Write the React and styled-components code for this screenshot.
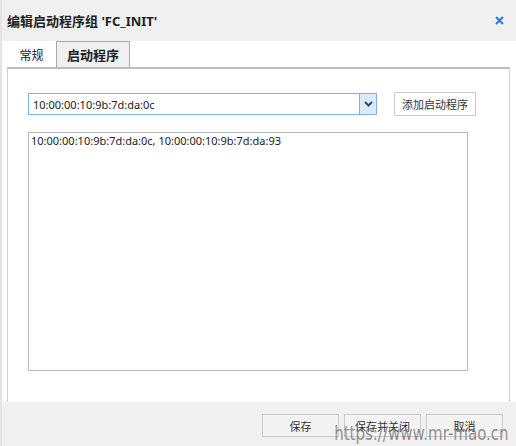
import React from "react";
import styled, { createGlobalStyle } from "styled-components";

const GlobalStyle = createGlobalStyle`
  html, body {
    margin: 0;
    padding: 0;
    background: #fff;
  }
  body {
    font-family: "Noto Sans", "Noto Sans CJK SC", sans-serif;
    font-size: 11px;
    color: #222;
  }
  * {
    box-sizing: border-box;
  }
`;

const Dialog = styled.div`
  position: relative;
  width: 516px;
  height: 446px;
  display: flex;
  flex-direction: column;
  background: #fff;
  border-left: 2px solid #e4e4e4;
  overflow: hidden;
`;

const Header = styled.header`
  height: 41px;
  flex: none;
  display: flex;
  align-items: center;
  justify-content: space-between;
  padding: 0 11px 0 5px;
  background: #f0f0f0;
`;

const Title = styled.h1`
  margin: 0;
  font-size: 13px;
  font-weight: 700;
  color: #222;
  font-family: "Noto Sans", "Noto Sans CJK SC", sans-serif;
`;

const CloseButton = styled.button`
  width: 12px;
  height: 12px;
  padding: 0;
  border: none;
  background: transparent;
  display: flex;
  align-items: center;
  justify-content: center;
  cursor: pointer;
`;

const Body = styled.div`
  flex: 1;
  display: flex;
  flex-direction: column;
  padding: 0 6px 0 5px;
`;

const TabBar = styled.div`
  height: 26px;
  flex: none;
  display: flex;
  align-items: stretch;
`;

const Tab = styled.div`
  width: ${(p) => p.$width}px;
  display: flex;
  align-items: center;
  justify-content: center;
  font-size: ${(p) => (p.$active ? 13 : 12)}px;
  font-weight: ${(p) => (p.$active ? 700 : 400)};
  color: #222;
  background: ${(p) => (p.$active ? "#f0f0f0" : "#fff")};
  border: 1px solid ${(p) => (p.$active ? "#a8a8a8" : "transparent")};
  border-bottom: none;
`;

const Panel = styled.section`
  flex: 1;
  border-top: 2px solid #bcbcbc;
  border-left: 1px solid #cfcfcf;
  border-right: 1px solid #cfcfcf;
  padding: 23px 0 0 20px;
  display: flex;
  flex-direction: column;
  gap: 16px;
`;

const Row = styled.div`
  display: flex;
  align-items: center;
  gap: 17px;
`;

const Select = styled.div`
  width: 349px;
  height: 22px;
  display: flex;
  border: 1px solid #7eb4ea;
  background: #fff;
`;

const SelectValue = styled.div`
  flex: 1;
  display: flex;
  align-items: center;
  padding-left: 4px;
  font-size: 11px;
  color: #222;
`;

const SelectArrow = styled.div`
  width: 17px;
  display: flex;
  align-items: center;
  justify-content: center;
  background: #dcebfc;
  border-left: 1px solid #7eb4ea;
`;

const Button = styled.button`
  width: ${(p) => p.$width}px;
  height: ${(p) => p.$height}px;
  padding: 0;
  font-family: "Noto Sans", "Noto Sans CJK SC", sans-serif;
  font-size: 11px;
  color: #333;
  background: ${(p) => p.$bg || "#fff"};
  border: 1px solid #cccccc;
  cursor: pointer;
`;

const TextArea = styled.div`
  width: 440px;
  height: 239px;
  border: 1px solid #b4b6cc;
  padding: 0 2px;
  font-size: 11px;
  line-height: 16px;
  color: #222;
`;

const Footer = styled.footer`
  height: 44px;
  flex: none;
  display: flex;
  justify-content: flex-end;
  align-items: flex-start;
  gap: 5px;
  padding: 12px 13px 0 0;
  background: #f0f0f0;
`;

const Watermark = styled.div`
  position: absolute;
  right: 7px;
  bottom: 1px;
  font-family: "DejaVu Sans", sans-serif;
  font-size: 20px;
  color: rgba(110, 110, 110, 0.75);
  transform: scaleX(0.75);
  transform-origin: right center;
  white-space: nowrap;
  pointer-events: none;
`;

const App = () => {
  return (
    <>
      <GlobalStyle />
      <Dialog>
        <Header>
          <Title>编辑启动程序组 'FC_INIT'</Title>
          <CloseButton aria-label="close">
            <svg width="9" height="9" viewBox="0 0 9 9">
              <path d="M1 1 L8 8 M8 1 L1 8" stroke="#2f7bd6" strokeWidth="2" />
            </svg>
          </CloseButton>
        </Header>
        <Body>
          <TabBar>
            <Tab $width={49}>常规</Tab>
            <Tab $width={74} $active>
              启动程序
            </Tab>
          </TabBar>
          <Panel>
            <Row>
              <Select>
                <SelectValue>10:00:00:10:9b:7d:da:0c</SelectValue>
                <SelectArrow>
                  <svg width="9" height="6" viewBox="0 0 9 6">
                    <path d="M1 1 L4.5 4.5 L8 1" fill="none" stroke="#2c4a82" strokeWidth="2" />
                  </svg>
                </SelectArrow>
              </Select>
              <Button $width={82} $height={24}>
                添加启动程序
              </Button>
            </Row>
            <TextArea>10:00:00:10:9b:7d:da:0c, 10:00:00:10:9b:7d:da:93</TextArea>
          </Panel>
        </Body>
        <Footer>
          <Button $width={77} $height={23} $bg="#f3f3f3">
            保存
          </Button>
          <Button $width={77} $height={23} $bg="#f3f3f3">
            保存并关闭
          </Button>
          <Button $width={77} $height={23} $bg="#f3f3f3">
            取消
          </Button>
        </Footer>
        <Watermark>https://www.mr-mao.cn</Watermark>
      </Dialog>
    </>
  );
};

export default App;
